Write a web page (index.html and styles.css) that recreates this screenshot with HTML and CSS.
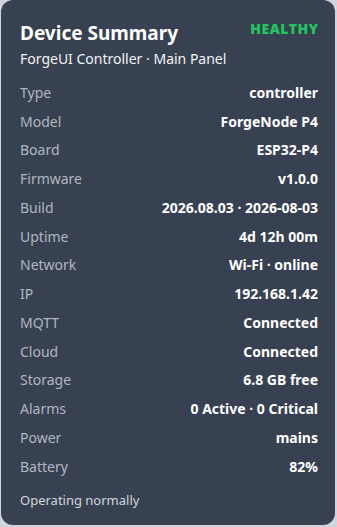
FILE: index.html
```html
<!DOCTYPE html>
<html lang="en">
  <head>
    <meta charset="UTF-8" />
    <meta name="viewport" content="width=device-width, initial-scale=1.0" />
    <title>Device Summary</title>
    <link rel="stylesheet" href="styles.css">
  </head>
  <body>
    <!-- device summary card -->
    <section class="summary-card">
      <header class="summary-head">
        <div>
          <h1 class="summary-title">Device Summary</h1>
          <p class="summary-sub">ForgeUI Controller · Main Panel</p>
        </div>
        <span class="summary-status">HEALTHY</span>
      </header>
      <ul class="summary-list">
        <li class="summary-row"><span>Type</span><b>controller</b></li>
        <li class="summary-row"><span>Model</span><b>ForgeNode P4</b></li>
        <li class="summary-row"><span>Board</span><b>ESP32-P4</b></li>
        <li class="summary-row"><span>Firmware</span><b>v1.0.0</b></li>
        <li class="summary-row"><span>Build</span><b>2026.08.03 · 2026-08-03</b></li>
        <li class="summary-row"><span>Uptime</span><b>4d 12h 00m</b></li>
        <li class="summary-row"><span>Network</span><b>Wi-Fi · online</b></li>
        <li class="summary-row"><span>IP</span><b>192.168.1.42</b></li>
        <li class="summary-row"><span>MQTT</span><b>Connected</b></li>
        <li class="summary-row"><span>Cloud</span><b>Connected</b></li>
        <li class="summary-row"><span>Storage</span><b>6.8 GB free</b></li>
        <li class="summary-row"><span>Alarms</span><b>0 Active · 0 Critical</b></li>
        <li class="summary-row"><span>Power</span><b>mains</b></li>
        <li class="summary-row"><span>Battery</span><b>82%</b></li>
      </ul>
      <p class="summary-foot">Operating normally</p>
    </section>
  </body>
</html>
```

FILE: styles.css
```css
/*global*/
* {
  margin: 0;
  padding: 0;
  box-sizing: border-box;
}

body {
  background-color: #d1d5db;
  font-family: "Noto Sans", "Open Sans", sans-serif;
  padding: 0 2px 2px 1px;
}

/*card*/
.summary-card {
  height: 525px;
  background-color: #374151;
  border-radius: 12px;
  padding: 18px 17px 0 19px;
  color: #fff;
}

.summary-head {
  display: flex;
  justify-content: space-between;
  align-items: flex-start;
}

.summary-title {
  font-size: 19px;
  font-weight: 700;
  line-height: 30px;
}

.summary-sub {
  margin-top: 1px;
  font-size: 14px;
  line-height: 20px;
  color: #f3f4f6;
}

.summary-status {
  margin-top: 1px;
  margin-right: -0.5px;
  font-size: 14px;
  font-weight: 900;
  letter-spacing: 0.5px;
  color: #22c55e;
}

/*rows*/
.summary-list {
  list-style: none;
  margin-top: 9px;
}

.summary-row {
  display: flex;
  justify-content: space-between;
  height: 28.75px;
  align-items: center;
  font-size: 14px;
}

.summary-row > span {
  color: #b1b7c0;
}

.summary-row > b {
  font-weight: 700;
}

.summary-foot {
  margin-top: 10px;
  font-size: 13px;
  color: #d1d5db;
}
```
